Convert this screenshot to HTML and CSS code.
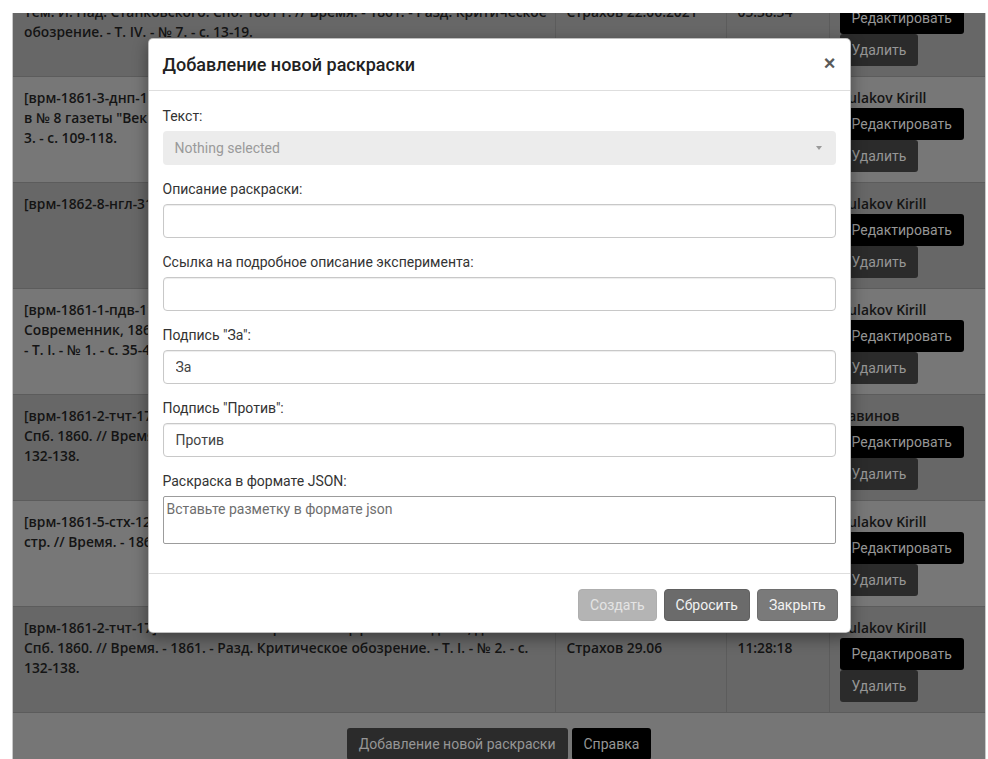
FILE: index.html
```html
<!DOCTYPE html>
<html lang="ru">
<head>
<meta charset="utf-8">
<title>Раскраски</title>
<link rel="stylesheet" href="styles.css">
</head>
<body>
<div class="frame">
  <table class="records">
    <colgroup>
      <col class="c-text"><col class="c-author"><col class="c-time"><col class="c-actions">
    </colgroup>
    <tbody>
      <tr class="shade">
        <td class="t-title">[врм-1861-7-стх-13] Н. Страхов. Стихотворения Я. П. Полонского. Изд. 2-е<br>Тем. И. Над. Станковского. Спб. 1861 г. // Время. - 1861. - Разд. Критическое<br>обозрение. - Т. IV. - № 7. - с. 13-19.</td>
        <td class="t-meta">Страхов 22.06.2021</td>
        <td class="t-meta">05:38:34</td>
        <td class="t-actions"><div class="who">Kulakov Kirill</div><button class="btn btn-edit">Редактировать</button><button class="btn btn-del">Удалить</button></td>
      </tr>
      <tr>
        <td class="t-title">[врм-1861-3-днп-19] Д. Н. П. Ответ на статью «Несколько слов о литературе», помещенную<br>в № 8 газеты "Век" // Время. - 1861. - Разд. Современное обозрение. - Т. I. - №<br>3. - с. 109-118.</td>
        <td class="t-meta">Страхов 29.06</td>
        <td class="t-meta">10:14:52</td>
        <td class="t-actions"><div class="who">Kulakov Kirill</div><button class="btn btn-edit">Редактировать</button><button class="btn btn-del">Удалить</button></td>
      </tr>
      <tr class="shade">
        <td class="t-title">[врм-1862-8-нгл-31] Н. Г-в. Литературные заметки // Время. - 1862. - № 8. - с. 31-44.</td>
        <td class="t-meta">Страхов 29.06</td>
        <td class="t-meta">10:41:07</td>
        <td class="t-actions"><div class="who">Kulakov Kirill</div><button class="btn btn-edit">Редактировать</button><button class="btn btn-del">Удалить</button></td>
      </tr>
      <tr>
        <td class="t-title">[врм-1861-1-пдв-11] П. Д. В. Русская литература в 1860 году. Отечественные записки,<br>Современник, 1860 // Время. - 1861. - Разд. Критическое обозрение.<br>- Т. I. - № 1. - с. 35-47.</td>
        <td class="t-meta">Страхов 29.06</td>
        <td class="t-meta">10:58:21</td>
        <td class="t-actions"><div class="who">Kulakov Kirill</div><button class="btn btn-edit">Редактировать</button><button class="btn btn-del">Удалить</button></td>
      </tr>
      <tr class="shade">
        <td class="t-title">[врм-1861-2-тчт-17] Т. Ч. Т. Стихотворения Н. Щербины. Изд. 2-е, дополненное.<br>Спб. 1860. // Время. - 1861. - Разд. Критическое обозрение. - Т. I. - № 2. - с.<br>132-138.</td>
        <td class="t-meta">Страхов 29.06</td>
        <td class="t-meta">11:05:43</td>
        <td class="t-actions"><div class="who">Савинов</div><button class="btn btn-edit">Редактировать</button><button class="btn btn-del">Удалить</button></td>
      </tr>
      <tr>
        <td class="t-title">[врм-1861-5-стх-12] Н. Страхов. Стихотворения А. Майкова. Спб. 1861. 312<br>стр. // Время. - 1861. - Разд. Критическое обозрение. - Т. II. - № 5. - с. 12-20.</td>
        <td class="t-meta">Страхов 29.06</td>
        <td class="t-meta">11:17:09</td>
        <td class="t-actions"><div class="who">Kulakov Kirill</div><button class="btn btn-edit">Редактировать</button><button class="btn btn-del">Удалить</button></td>
      </tr>
      <tr class="shade">
        <td class="t-title">[врм-1861-2-тчт-17] Т. Ч. Т. Стихотворения Н. Щербины. Изд. 2-е, дополненное.<br>Спб. 1860. // Время. - 1861. - Разд. Критическое обозрение. - Т. I. - № 2. - с.<br>132-138.</td>
        <td class="t-meta">Страхов 29.06</td>
        <td class="t-meta">11:28:18</td>
        <td class="t-actions"><div class="who">Kulakov Kirill</div><button class="btn btn-edit">Редактировать</button><button class="btn btn-del">Удалить</button></td>
      </tr>
    </tbody>
  </table>

  <div class="page-actions">
    <button class="btn btn-del">Добавление новой раскраски</button>
    <button class="btn btn-edit">Справка</button>
  </div>

  <div class="backdrop">
    <div class="modal">
      <div class="modal-header">
        <h4 class="modal-title">Добавление новой раскраски</h4>
        <button class="close" type="button">×</button>
      </div>
      <div class="modal-body">
        <div class="form-group">
          <label>Текст:</label>
          <div class="select">
            <span class="select-text">Nothing selected</span>
            <span class="caret"></span>
          </div>
        </div>
        <div class="form-group">
          <label>Описание раскраски:</label>
          <input class="form-control" type="text">
        </div>
        <div class="form-group">
          <label>Ссылка на подробное описание эксперимента:</label>
          <input class="form-control" type="text">
        </div>
        <div class="form-group">
          <label>Подпись "За":</label>
          <input class="form-control" type="text" value="За">
        </div>
        <div class="form-group">
          <label>Подпись "Против":</label>
          <input class="form-control" type="text" value="Против">
        </div>
        <div class="form-group">
          <label>Раскраска в формате JSON:</label>
          <textarea class="json-area" placeholder="Вставьте разметку в формате json"></textarea>
        </div>
      </div>
      <div class="modal-footer">
        <button class="mbtn mbtn-disabled" type="button">Создать</button>
        <button class="mbtn mbtn-reset" type="button">Сбросить</button>
        <button class="mbtn mbtn-close" type="button">Закрыть</button>
      </div>
    </div>
  </div>
</div>
</body>
</html>
```

FILE: styles.css
```css
* { box-sizing: border-box; }

html, body {
  margin: 0;
  padding: 0;
  background: #fff;
}

body {
  font-family: Roboto, "Noto Sans", sans-serif;
  font-size: 14px;
  line-height: 20px;
  color: #333;
}

/* dimmed page behind the dialog */
.frame {
  position: relative;
  margin: 13px 0 0 12px;
  width: 974px;
  height: 746px;
  overflow: hidden;
  background: #767676;
  border-left: 1px solid #c9c9c9;
  border-right: 1px solid #c9c9c9;
}

.records {
  width: 972px;
  margin-top: -43px;
  border-collapse: collapse;
  table-layout: fixed;
  font-family: "Open Sans", "Noto Sans", sans-serif;
  font-weight: 600;
  font-size: 13.8px;
  line-height: 20px;
  color: #141414;
}

.c-text { width: 542px; }
.c-author { width: 171px; }
.c-time { width: 103px; }
.c-actions { width: 156px; }

.records tr { background: #777; height: 106px; }
.records tr.shade { background: #676767; }

.records td {
  vertical-align: top;
  border-top: 1px solid #5c5c5c;
  border-left: 1px solid #5c5c5c;
  border-bottom: 1px solid #5c5c5c;
  padding: 11px 11px 10px;
}
.records td:first-child { border-left: 0; }

.t-title {
  white-space: nowrap;
  overflow: hidden;
}

.t-meta { padding-top: 31px !important; }

.t-actions { padding-left: 10px !important; }

.who {
  white-space: nowrap;
  overflow: hidden;
}

.btn {
  display: block;
  height: 32px;
  padding: 0 12px;
  border: 0;
  border-radius: 3px;
  font-family: Roboto, "Noto Sans", sans-serif;
  font-size: 14px;
  font-weight: 400;
  line-height: 32px;
  color: #969696;
  cursor: pointer;
}
.btn-edit { background: #000; }
.btn-del { background: #2b2b2b; }

.page-actions {
  display: flex;
  justify-content: center;
  gap: 4px;
  padding-top: 15px;
}

/* dialog */
.backdrop {
  position: absolute;
  inset: 0;
  display: flex;
  justify-content: center;
  align-items: flex-start;
  padding-top: 25px;
}

.modal {
  width: 703px;
  background: #fff;
  border: 1px solid rgba(0, 0, 0, 0.25);
  border-radius: 5px;
  box-shadow: 0 5px 15px rgba(0, 0, 0, 0.4);
}

.modal-header {
  display: flex;
  align-items: center;
  justify-content: space-between;
  padding: 14px;
  border-bottom: 1px solid #dedede;
}

.modal-title {
  margin: 0;
  font-size: 18px;
  font-weight: 500;
  line-height: 23px;
  color: #222;
}

.close {
  padding: 0;
  margin: 0 0 3px 0;
  border: 0;
  background: none;
  font-family: "Liberation Sans", Arial, sans-serif;
  font-size: 20px;
  font-weight: 700;
  line-height: 20px;
  color: #5a5a5a;
  cursor: pointer;
}

.modal-body {
  padding: 15px 14px;
}

.form-group {
  margin-bottom: 14px;
}

.form-group label {
  display: block;
  margin-bottom: 5px;
  font-size: 14px;
  line-height: 20px;
  color: #333;
}

.select {
  display: flex;
  align-items: center;
  justify-content: space-between;
  height: 34px;
  padding: 0 12px;
  background: #ececec;
  border-radius: 4px;
}
.select-text { color: #9a9a9a; }
.caret {
  width: 0;
  height: 0;
  margin-right: 2px;
  border-left: 3.5px solid transparent;
  border-right: 3.5px solid transparent;
  border-top: 4px solid #9a9a9a;
}

.form-control {
  display: block;
  width: 100%;
  height: 34px;
  padding: 6px 12px;
  font-family: Roboto, "Noto Sans", sans-serif;
  font-size: 14px;
  line-height: 20px;
  color: #444;
  background: #fff;
  border: 1px solid #c8c8c8;
  border-radius: 4px;
  box-shadow: inset 0 1px 1px rgba(0, 0, 0, 0.075);
}

.json-area {
  display: block;
  width: 100%;
  height: 48px;
  padding: 2px 3px;
  font-family: Roboto, "Noto Sans", sans-serif;
  font-size: 14px;
  line-height: 20px;
  border: 1px solid #9c9c9c;
  border-radius: 2px;
  resize: none;
}
.json-area::placeholder { color: #6e6e6e; }

.modal-footer {
  display: flex;
  justify-content: flex-end;
  gap: 7px;
  padding: 15px 12px 11px 14px;
  border-top: 1px solid #dedede;
}

.mbtn {
  height: 32px;
  padding: 0 11px;
  border: 1px solid transparent;
  border-radius: 4px;
  font-family: Roboto, "Noto Sans", sans-serif;
  font-size: 14px;
  line-height: 30px;
  color: #f2f2f2;
  cursor: pointer;
}
.mbtn-disabled { background: #b4b4b4; border-color: #aeaeae; color: #e4e4e4; }
.mbtn-reset { background: #6b6b6b; border-color: #606060; }
.mbtn-close { background: #7a7a7a; border-color: #6e6e6e; }
```
